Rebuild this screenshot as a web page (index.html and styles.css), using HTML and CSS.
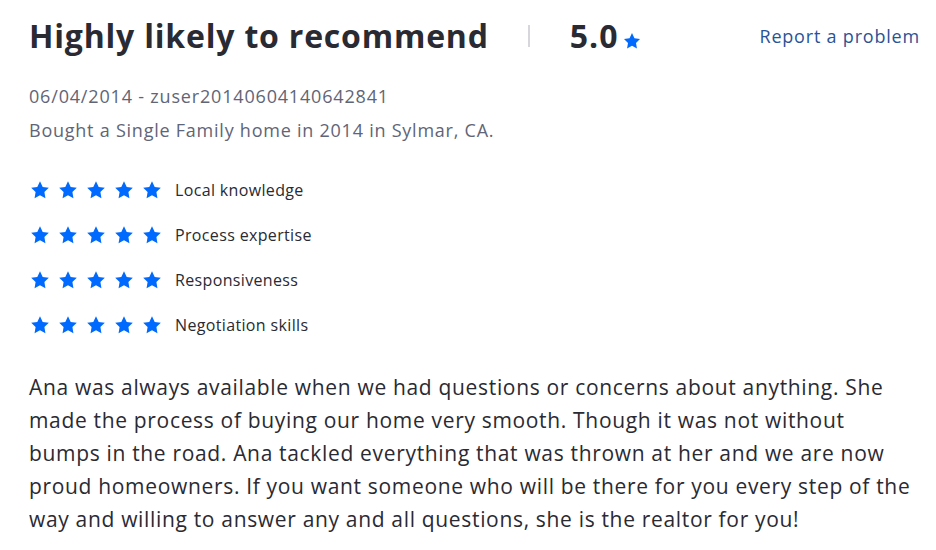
FILE: index.html
```
<!DOCTYPE html>
<html>
<head>
<meta charset="utf-8">
<link rel="stylesheet" href="styles.css">
</head>
<body>
<div class="review">
  <div class="header">
    <h1 class="title">Highly likely to recommend</h1>
    <span class="divider"></span>
    <div class="overall">
      <span class="score">5.0</span>
      <svg class="star-small" viewBox="0 0 24 24"><path d="M12 2.5l2.95 6.1 6.65.95-4.8 4.7 1.13 6.65L12 17.75l-5.93 3.15 1.13-6.65-4.8-4.7 6.65-.95z"/></svg>
    </div>
    <a class="report" href="#">Report a problem</a>
  </div>
  <div class="meta">06/04/2014 - zuser20140604140642841</div>
  <div class="meta bought">Bought a Single Family home in 2014 in Sylmar, CA.</div>
  <ul class="ratings">
    <li class="rating-row">
      <span class="stars"><svg viewBox="0 0 24 24"><path d="M12 2.5l2.95 6.1 6.65.95-4.8 4.7 1.13 6.65L12 17.75l-5.93 3.15 1.13-6.65-4.8-4.7 6.65-.95z"/></svg><svg viewBox="0 0 24 24"><path d="M12 2.5l2.95 6.1 6.65.95-4.8 4.7 1.13 6.65L12 17.75l-5.93 3.15 1.13-6.65-4.8-4.7 6.65-.95z"/></svg><svg viewBox="0 0 24 24"><path d="M12 2.5l2.95 6.1 6.65.95-4.8 4.7 1.13 6.65L12 17.75l-5.93 3.15 1.13-6.65-4.8-4.7 6.65-.95z"/></svg><svg viewBox="0 0 24 24"><path d="M12 2.5l2.95 6.1 6.65.95-4.8 4.7 1.13 6.65L12 17.75l-5.93 3.15 1.13-6.65-4.8-4.7 6.65-.95z"/></svg><svg viewBox="0 0 24 24"><path d="M12 2.5l2.95 6.1 6.65.95-4.8 4.7 1.13 6.65L12 17.75l-5.93 3.15 1.13-6.65-4.8-4.7 6.65-.95z"/></svg></span>
      <span class="label">Local knowledge</span>
    </li>
    <li class="rating-row">
      <span class="stars"><svg viewBox="0 0 24 24"><path d="M12 2.5l2.95 6.1 6.65.95-4.8 4.7 1.13 6.65L12 17.75l-5.93 3.15 1.13-6.65-4.8-4.7 6.65-.95z"/></svg><svg viewBox="0 0 24 24"><path d="M12 2.5l2.95 6.1 6.65.95-4.8 4.7 1.13 6.65L12 17.75l-5.93 3.15 1.13-6.65-4.8-4.7 6.65-.95z"/></svg><svg viewBox="0 0 24 24"><path d="M12 2.5l2.95 6.1 6.65.95-4.8 4.7 1.13 6.65L12 17.75l-5.93 3.15 1.13-6.65-4.8-4.7 6.65-.95z"/></svg><svg viewBox="0 0 24 24"><path d="M12 2.5l2.95 6.1 6.65.95-4.8 4.7 1.13 6.65L12 17.75l-5.93 3.15 1.13-6.65-4.8-4.7 6.65-.95z"/></svg><svg viewBox="0 0 24 24"><path d="M12 2.5l2.95 6.1 6.65.95-4.8 4.7 1.13 6.65L12 17.75l-5.93 3.15 1.13-6.65-4.8-4.7 6.65-.95z"/></svg></span>
      <span class="label">Process expertise</span>
    </li>
    <li class="rating-row">
      <span class="stars"><svg viewBox="0 0 24 24"><path d="M12 2.5l2.95 6.1 6.65.95-4.8 4.7 1.13 6.65L12 17.75l-5.93 3.15 1.13-6.65-4.8-4.7 6.65-.95z"/></svg><svg viewBox="0 0 24 24"><path d="M12 2.5l2.95 6.1 6.65.95-4.8 4.7 1.13 6.65L12 17.75l-5.93 3.15 1.13-6.65-4.8-4.7 6.65-.95z"/></svg><svg viewBox="0 0 24 24"><path d="M12 2.5l2.95 6.1 6.65.95-4.8 4.7 1.13 6.65L12 17.75l-5.93 3.15 1.13-6.65-4.8-4.7 6.65-.95z"/></svg><svg viewBox="0 0 24 24"><path d="M12 2.5l2.95 6.1 6.65.95-4.8 4.7 1.13 6.65L12 17.75l-5.93 3.15 1.13-6.65-4.8-4.7 6.65-.95z"/></svg><svg viewBox="0 0 24 24"><path d="M12 2.5l2.95 6.1 6.65.95-4.8 4.7 1.13 6.65L12 17.75l-5.93 3.15 1.13-6.65-4.8-4.7 6.65-.95z"/></svg></span>
      <span class="label">Responsiveness</span>
    </li>
    <li class="rating-row">
      <span class="stars"><svg viewBox="0 0 24 24"><path d="M12 2.5l2.95 6.1 6.65.95-4.8 4.7 1.13 6.65L12 17.75l-5.93 3.15 1.13-6.65-4.8-4.7 6.65-.95z"/></svg><svg viewBox="0 0 24 24"><path d="M12 2.5l2.95 6.1 6.65.95-4.8 4.7 1.13 6.65L12 17.75l-5.93 3.15 1.13-6.65-4.8-4.7 6.65-.95z"/></svg><svg viewBox="0 0 24 24"><path d="M12 2.5l2.95 6.1 6.65.95-4.8 4.7 1.13 6.65L12 17.75l-5.93 3.15 1.13-6.65-4.8-4.7 6.65-.95z"/></svg><svg viewBox="0 0 24 24"><path d="M12 2.5l2.95 6.1 6.65.95-4.8 4.7 1.13 6.65L12 17.75l-5.93 3.15 1.13-6.65-4.8-4.7 6.65-.95z"/></svg><svg viewBox="0 0 24 24"><path d="M12 2.5l2.95 6.1 6.65.95-4.8 4.7 1.13 6.65L12 17.75l-5.93 3.15 1.13-6.65-4.8-4.7 6.65-.95z"/></svg></span>
      <span class="label">Negotiation skills</span>
    </li>
  </ul>
  <p class="body">Ana was always available when we had questions or concerns about anything. She made the process of buying our home very smooth. Though it was not without bumps in the road. Ana tackled everything that was thrown at her and we are now proud homeowners. If you want someone who will be there for you every step of the way and willing to answer any and all questions, she is the realtor for you!</p>
</div>
</body>
</html>
```
FILE: styles.css
```
html, body {
  margin: 0;
  padding: 0;
  background: #ffffff;
}
body {
  font-family: "Open Sans", "Noto Sans", sans-serif;
  color: #2a2a33;
}
.review {
  padding: 12px 16px 0 29px;
}
.header {
  display: flex;
  align-items: center;
  height: 48px;
}
.title {
  margin: 0;
  font-size: 32px;
  font-weight: 700;
  line-height: 48px;
  letter-spacing: 0.8px;
  color: #2a2a33;
}
.divider {
  width: 2px;
  height: 22px;
  background: #d6d6dc;
  margin: 0 40px 0 39px;
}
.overall {
  display: flex;
  align-items: baseline;
}
.score {
  font-size: 32px;
  font-weight: 700;
  line-height: 48px;
  letter-spacing: 1px;
}
.star-small {
  width: 20px;
  height: 20px;
  margin-left: 4px;
  fill: #006aff;
  align-self: center;
  margin-top: 10px;
}
.report {
  margin-left: auto;
  font-size: 18px;
  letter-spacing: 0.8px;
  color: #2a5396;
  text-decoration: none;
}
.meta {
  margin-top: 23px;
  font-size: 18px;
  line-height: 26px;
  letter-spacing: 0.82px;
  color: #5f6577;
}
.meta.bought {
  margin-top: 8px;
  letter-spacing: 0.76px;
}
.ratings {
  list-style: none;
  margin: 24px 0 0;
  padding: 0;
}
.rating-row {
  display: flex;
  align-items: center;
  height: 45px;
}
.stars {
  display: flex;
  gap: 6px;
  margin-right: 12px;
}
.stars svg {
  width: 22px;
  height: 22px;
  fill: #006aff;
}
.label {
  font-size: 16px;
  letter-spacing: 0.35px;
  color: #2a2a33;
}
.body {
  margin: 24px 4px 0 0;
  font-size: 21px;
  line-height: 33px;
  letter-spacing: 0.67px;
  color: #2a2a33;
}
```
